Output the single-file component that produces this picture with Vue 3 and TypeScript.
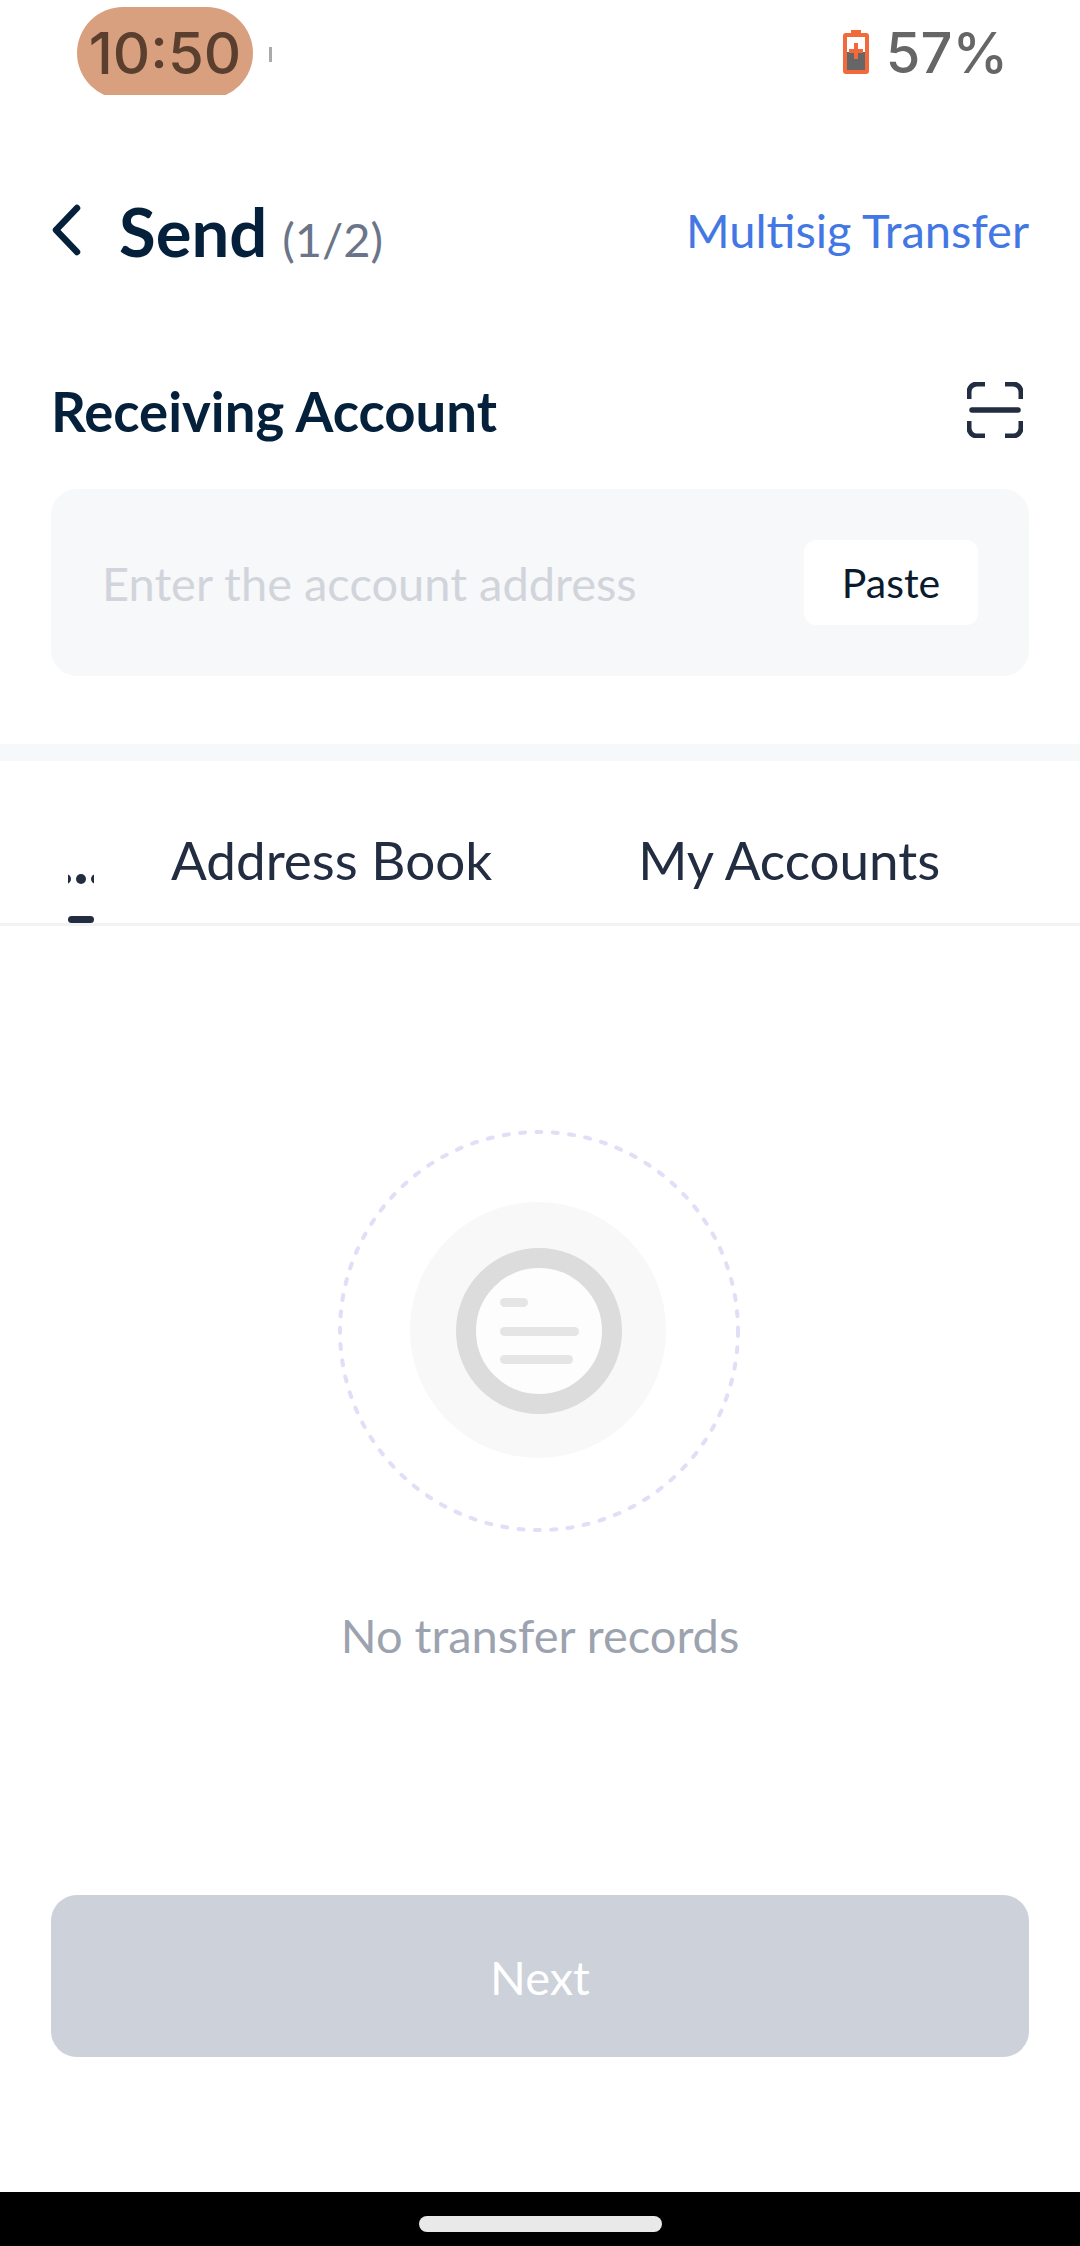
<script setup lang="ts">
const tabs = ['Address Book', 'My Accounts']
</script>

<template>
  <div class="page">
    <header class="status">
      <div class="clock">10:50</div>
      <span class="notif"></span>
      <div class="battery">
        <svg class="battery-icon" viewBox="0 0 26 44" width="26" height="44">
          <path d="M8 0h10v3h5a3 3 0 0 1 3 3v35a3 3 0 0 1-3 3H3a3 3 0 0 1-3-3V6a3 3 0 0 1 3-3h5z" fill="#f26a3c" />
          <rect x="4" y="7" width="18" height="33" fill="#fff" />
          <rect x="4" y="22" width="18" height="18" fill="#666" />
          <path d="M11 13h4v6h5v4h-5v6h-4v-6H6v-4h5z" fill="#f26a3c" />
        </svg>
        <span>57%</span>
      </div>
    </header>

    <nav class="nav">
      <div class="nav-left">
        <svg class="back" viewBox="0 0 30 52" width="30" height="52">
          <path d="M26 4 5 26l21 22" fill="none" stroke="#04203a" stroke-width="6.5" stroke-linecap="round" stroke-linejoin="round" />
        </svg>
        <span class="title">Send</span>
        <span class="step">(1/2)</span>
      </div>
      <span class="multisig">Multisig Transfer</span>
    </nav>

    <div class="label-row">
      <span class="label">Receiving Account</span>
      <svg viewBox="0 0 56 56" width="56" height="56">
        <path d="M18 2H10a8 8 0 0 0-8 8v7M38 2h8a8 8 0 0 1 8 8v7M18 54H10a8 8 0 0 1-8-8v-7M38 54h8a8 8 0 0 0 8-8v-7" fill="none" stroke="#232d42" stroke-width="5" />
        <path d="M5 28h46" fill="none" stroke="#232d42" stroke-width="5.5" stroke-linecap="round" />
      </svg>
    </div>

    <div class="input">
      <span class="placeholder">Enter the account address</span>
      <button class="paste">Paste</button>
    </div>

    <div class="band"></div>

    <div class="tabs">
      <div class="tab-more">
        <div class="dots"><i></i><i></i><i></i></div>
        <div class="indicator"></div>
      </div>
      <span v-for="tab in tabs" :key="tab" class="tab">{{ tab }}</span>
    </div>

    <main class="empty">
      <svg viewBox="0 0 404 404" width="404" height="404">
        <circle cx="201" cy="202" r="199" fill="none" stroke="#dfdff7" stroke-width="4" stroke-dasharray="5 11.4" stroke-linecap="round" />
        <circle cx="200" cy="201" r="128" fill="#f8f8f8" />
        <circle cx="201" cy="202" r="73" fill="#fdfdfd" stroke="#dcdcdc" stroke-width="20" />
        <rect x="162" y="169" width="28" height="9" rx="4.5" fill="#e5e5e5" />
        <rect x="162" y="198" width="79" height="9" rx="4.5" fill="#e5e5e5" />
        <rect x="162" y="226" width="73" height="9" rx="4.5" fill="#e5e5e5" />
      </svg>
      <p class="empty-text">No transfer records</p>
    </main>

    <footer class="footer">
      <button class="next">Next</button>
    </footer>

    <div class="home-bar"><span></span></div>
  </div>
</template>

<style>
html,
body {
  margin: 0;
  background: #fff;
}
</style>

<style scoped>
.page {
  width: 1080px;
  height: 2246px;
  display: flex;
  flex-direction: column;
  background: #fff;
  font-family: Lato, "Liberation Sans", sans-serif;
  overflow: hidden;
}

.status {
  height: 95px;
  flex: none;
  display: flex;
  align-items: flex-start;
  overflow: hidden;
  font-family: Inter, Roboto, sans-serif;
  font-weight: 500;
  line-height: 92px;
}

.clock {
  margin: 7px 0 0 77px;
  width: 176px;
  height: 92px;
  border-radius: 46px;
  background: #d9a080;
  color: #5b3f2e;
  font-size: 58px;
  text-align: center;
}

.notif {
  width: 3px;
  height: 15px;
  margin: 47px 0 0 16px;
  background: #aaa;
}

.battery {
  margin: 7px 72px 0 auto;
  display: flex;
  align-items: center;
  gap: 17px;
  color: #666;
  font-size: 56px;
}

.battery-icon {
  margin-top: -2px;
}

.nav {
  height: 180px;
  flex: none;
  margin-top: 45px;
  padding: 0 51px;
  display: flex;
  align-items: center;
  justify-content: space-between;
}

.nav-left {
  display: flex;
  align-items: baseline;
  padding-top: 1px;
}

.back {
  align-self: center;
  margin-right: 38px;
  margin-top: -1px;
}

.title {
  font-size: 67px;
  font-weight: 700;
  color: #04203a;
}

.step {
  margin-left: 15px;
  font-size: 47px;
  color: #6b7589;
}

.multisig {
  font-size: 47px;
  color: #4378e4;
}

.label-row {
  height: 56px;
  flex: none;
  margin-top: 62px;
  padding: 0 57px 0 51px;
  display: flex;
  align-items: center;
  justify-content: space-between;
}

.label {
  font-size: 54.5px;
  font-weight: 700;
  color: #04203a;
  padding-top: 2px;
}

.input {
  height: 187px;
  flex: none;
  margin: 51px 51px 0;
  padding: 0 51px;
  box-sizing: border-box;
  display: flex;
  align-items: center;
  justify-content: space-between;
  background: #f7f8fa;
  border-radius: 26px;
}

.placeholder {
  font-size: 47px;
  color: #d1d5db;
}

.paste {
  width: 174px;
  height: 85px;
  border: none;
  border-radius: 12px;
  background: #fff;
  color: #0b1b2e;
  font-family: inherit;
  font-size: 41px;
}

.band {
  height: 17px;
  flex: none;
  margin-top: 68px;
  background: #f7f8fa;
}

.tabs {
  height: 162px;
  flex: none;
  display: flex;
  align-items: center;
  border-bottom: 3px solid #f3f3f4;
  color: #232d42;
  font-size: 53px;
  position: relative;
}

.tab-more {
  width: 26px;
  margin-left: 68px;
  align-self: stretch;
  position: relative;
  overflow: hidden;
}

.dots {
  display: flex;
  justify-content: center;
  gap: 5px;
  margin-top: 113px;
}

.dots i {
  flex: none;
  width: 10px;
  height: 10px;
  border-radius: 50%;
  background: #232d42;
}

.indicator {
  position: absolute;
  left: 0;
  right: 0;
  bottom: 0;
  height: 7px;
  border-radius: 4px;
  background: #232d42;
}

.tab {
  margin-left: 77px;
  padding-top: 34px;
  white-space: nowrap;
}

.tab + .tab {
  margin-left: 146px;
}

.empty {
  flex: 1;
  display: flex;
  flex-direction: column;
  align-items: center;
  padding-top: 203px;
}

.empty-text {
  margin: 72px 0 0;
  font-size: 47px;
  line-height: 60px;
  color: #9ca3af;
}

.footer {
  flex: none;
  height: 297px;
  padding: 0 51px;
  box-sizing: border-box;
}

.next {
  width: 100%;
  height: 162px;
  padding-top: 2px;
  border: none;
  border-radius: 26px;
  background: #ccd1da;
  color: #fff;
  font-family: inherit;
  font-size: 47px;
}

.home-bar {
  height: 54px;
  flex: none;
  background: #000;
  display: flex;
  justify-content: center;
  padding-top: 24px;
  box-sizing: border-box;
}

.home-bar span {
  width: 243px;
  height: 16px;
  border-radius: 8px;
  background: #e9e9e9;
}
</style>
